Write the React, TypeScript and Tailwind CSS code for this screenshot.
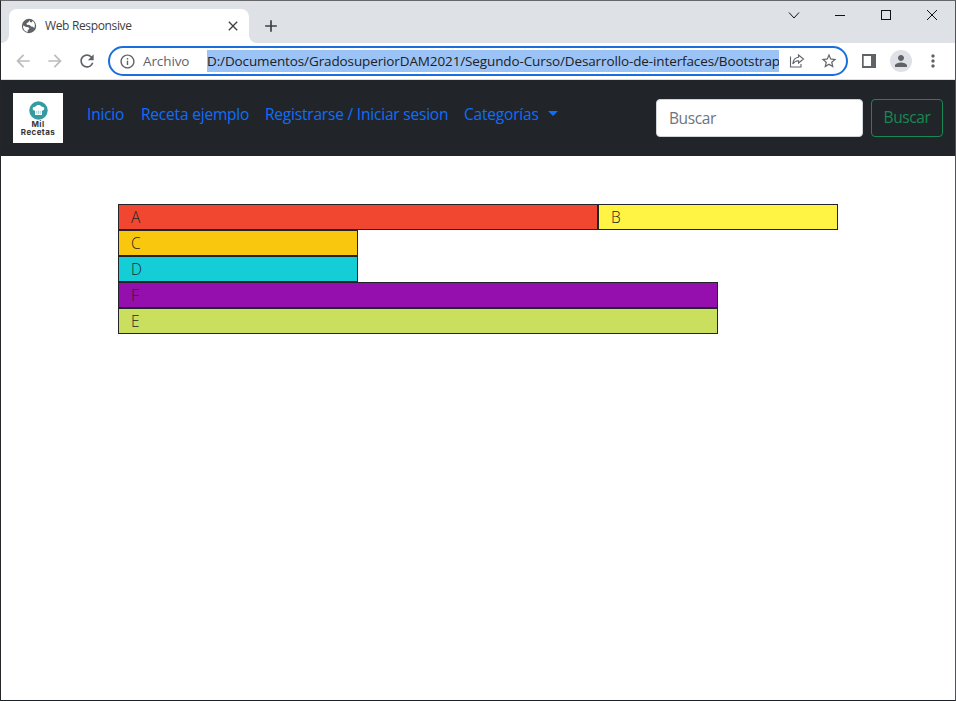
import type { ReactNode } from "react";
import { MdAdd, MdArrowBack, MdArrowForward, MdClose, MdInfoOutline, MdMoreVert, MdPerson, MdRefresh, MdStarBorder } from "react-icons/md";

function Globe() {
  return (
    <svg className="size-4 shrink-0" viewBox="0 0 16 16">
      <circle cx="8" cy="8" r="7.2" fill="#5f6368" />
      <path d="M2 7.400 5.200 9l2.200.2 1 1.600-1.700 1.400v1.700C4 13.500 1.800 11 2 7.400ZM8.600 2.200 7.400 4.300 5.600 5.300l.2 1.500 2.800.1 1.600 1.700 1.700.2 1.400 1.200c1.200-2.700.5-5.600-1.600-7L10.400 4.600 9 4Z" fill="#fff" />
    </svg>
  );
}

function TabStrip() {
  return (
    <div className="flex h-[42px] items-start bg-[#dee1e6]">
      <div className="relative ml-2 mt-2 flex h-[34px] w-[240px] items-center rounded-t-lg bg-white pl-3 pr-2 text-[#3c4043]">
        <svg className="absolute -left-2 bottom-0 size-2" viewBox="0 0 8 8"><path d="M8 0v8H0a8 8 0 0 0 8-8Z" fill="#fff" /></svg>
        <svg className="absolute -right-2 bottom-0 size-2" viewBox="0 0 8 8"><path d="M0 0v8h8a8 8 0 0 1-8-8Z" fill="#fff" /></svg>
        <Globe />
        <span className="ml-2 grow text-[12px] tracking-[-0.350px]">Web Responsive</span>
        <MdClose className="size-4 shrink-0 text-[#3c4043]" />
      </div>
      <MdAdd className="ml-3 mt-[15px] size-5 text-[#3c4043]" />
      <svg className="ml-auto h-7 w-[184px]" viewBox="0 0 184 28" fill="none" stroke="#111" strokeWidth="1">
        <path d="M18 11.500 23 17l5-5.500" />
        <path d="M64 14.500h10" shapeRendering="crispEdges" />
        <path d="M110.500 9.500h9v9h-9z" shapeRendering="crispEdges" />
        <path d="m156 9 10 10m0-10-10 10" />
      </svg>
    </div>
  );
}

function Toolbar() {
  return (
    <div className="flex h-[37px] items-center border-b border-[#dcdee1] bg-white pl-3 pr-3 text-[#5f6368]">
      <MdArrowBack className="size-5 shrink-0 text-[#babcbe]" />
      <MdArrowForward className="ml-3 size-5 shrink-0 text-[#babcbe]" />
      <MdRefresh className="ml-3 size-5 shrink-0" />
      <div className="ml-[11px] flex h-[30px] w-[740px] shrink-0 items-center rounded-full border-2 border-[#1a6fdc] pl-[9px] pr-[8px]">
        <MdInfoOutline className="size-[17px] shrink-0" />
        <span className="ml-[7px] w-[46px] whitespace-nowrap text-[13.500px] tracking-[-0.1px]">Archivo</span>
        <span className="ml-2 h-4 w-px bg-[#9aa0a6]" />
        <span className="ml-[10px] h-[22px] w-[572px] shrink-0 overflow-hidden whitespace-nowrap bg-[#9cc3f5] text-[13.500px] leading-[22px] tracking-[-0.120px] text-[#202124]">
          D:/Documentos/GradosuperiorDAM2021/Segundo-Curso/Desarrollo-de-interfaces/Bootstrap
        </span>
        <svg className="ml-[10px] size-4 shrink-0" viewBox="0 0 16 16" fill="none" stroke="#5f6368" strokeWidth="1.100">
          <path d="M1.500 3.500v10.500h10.500v-3M9.500 2l5 4-5 4V7.700C7 7.600 5.200 8.600 3.800 11c.3-3.600 2.200-6.500 5.700-6.800Z" />
        </svg>
        <MdStarBorder className="ml-[15px] size-[18px] shrink-0" />
      </div>
      <svg className="ml-[14px] size-[14px] shrink-0" viewBox="0 0 14 14"><path d="M0 0h14v14H0zM1.700 2v10H9V2z" fill="#5f6368" fillRule="evenodd" /></svg>
      <div className="ml-[14px] flex size-[22px] shrink-0 items-center justify-center rounded-full bg-[#dee1e6]">
        <MdPerson className="size-[18px]" />
      </div>
      <MdMoreVert className="ml-[11px] size-5 shrink-0" />
    </div>
  );
}

function Logo() {
  return (
    <div className="flex h-[50px] w-[50px] shrink-0 flex-col items-center bg-white pt-2 text-center font-[Inter,sans-serif] text-[8px] font-bold leading-[8px] tracking-[0.400px] text-[#333]">
      <svg className="size-[19px] shrink-0" viewBox="0 0 19 19">
        <circle cx="9.500" cy="9.500" r="9.200" fill="#359ba3" />
        <path d="M6 14V9.800C2.300 9 3.500 5.200 6.400 5.800 7.500 3.300 11.500 3.300 12.600 5.800c2.900-.6 4.100 3.200.4 4V14Z" fill="#fff" />
        <path d="M7.800 10v3M9.500 9.500V13m1.700-3v3" stroke="#6dbbc0" strokeWidth=".6" />
      </svg>
      <p>Mil<br />Recetas</p>
    </div>
  );
}

function NavLink({ children, className }: { children: ReactNode; className: string }) {
  return <a className={`shrink-0 whitespace-nowrap tracking-[-0.200px] ${className}`}>{children}</a>;
}

function Navbar() {
  return (
    <nav className="flex h-[76px] shrink-0 items-center bg-[#212529] px-3 text-[15.500px] text-[#0d6efd]">
      <Logo />
      <div className="mb-[7px] ml-6 flex gap-4">
        <NavLink className="w-[38px]">Inicio</NavLink>
        <NavLink className="w-[108px]">Receta ejemplo</NavLink>
        <NavLink className="w-[183px]">Registrarse / Iniciar sesion</NavLink>
        <NavLink className="w-[75px]">Categorías</NavLink>
      </div>
      <span className="mb-[9px] ml-[9px] border-x-[5px] border-t-[5px] border-x-transparent border-t-[#0d6efd]" />
      <form className="ml-auto flex gap-2">
        <input className="h-[38px] w-[207px] rounded border border-[#ced4da] bg-white px-3 tracking-[-0.400px] placeholder:text-[#6c757d]" placeholder="Buscar" />
        <button type="button" className="h-[38px] w-[72px] rounded border border-[#198754] tracking-[-0.400px] text-[#198754]">Buscar</button>
      </form>
    </nav>
  );
}

function Cell({ label, className }: { label: string; className: string }) {
  return <div className={`h-[26px] border border-[#212529] pl-3 text-[15.500px] font-[350] leading-6 ${className}`}>{label}</div>;
}

export default function App() {
  return (
    <div className="flex h-[701px] w-[956px] flex-col overflow-hidden border border-b-[#1c2024] border-l-[#24262a] border-r-[#505255] border-t-[#66686b] bg-white font-['Open_Sans','Noto_Sans',sans-serif] text-[#212529]">
      <TabStrip />
      <Toolbar />
      <Navbar />
      <main className="ml-[117px] mt-12 flex w-[720px] flex-wrap">
        <Cell label="A" className="w-[480px] bg-[#f1462f]" />
        <Cell label="B" className="w-[240px] bg-[#fff344]" />
        <Cell label="C" className="mr-[480px] w-[240px] bg-[#f9c80e]" />
        <Cell label="D" className="mr-[480px] w-[240px] bg-[#15cdd6]" />
        <Cell label="F" className="w-[600px] bg-[#940fad]" />
        <Cell label="E" className="w-[600px] bg-[#c9df5d]" />
      </main>
    </div>
  );
}
